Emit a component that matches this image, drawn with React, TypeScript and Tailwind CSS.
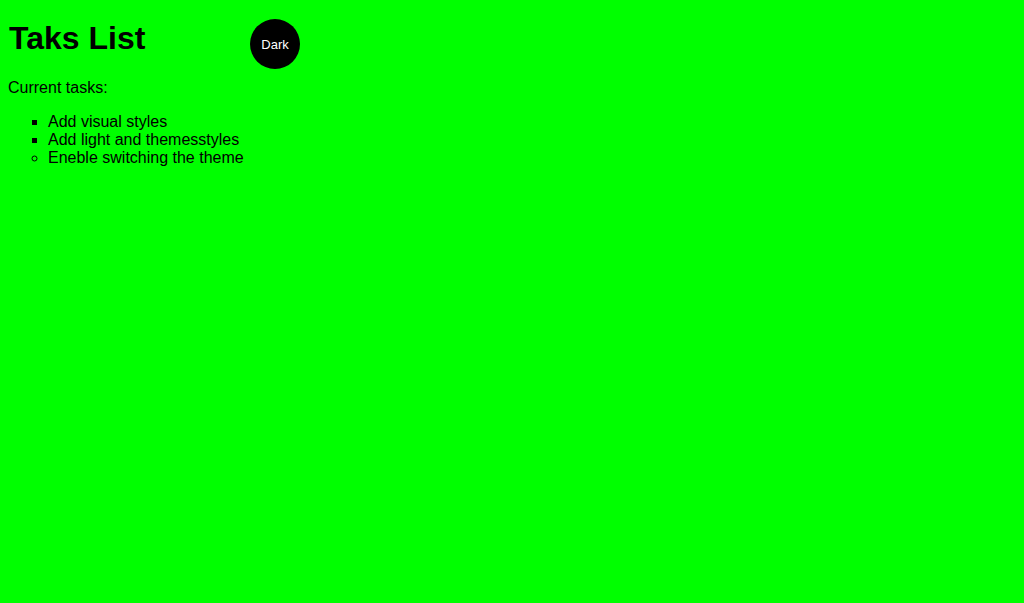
export default function App() {
  const tasks = [
    { text: "Add visual styles", done: true },
    { text: "Add light and themesstyles", done: true },
    { text: "Eneble switching the theme", done: false },
  ];

  return (
    <div className="min-h-screen bg-[#00ff00] p-2 font-['Liberation_Sans',Arial,sans-serif] text-black">
      {/* Header */}
      <div className="flex items-start pt-[11px]">
        <h1 className="w-[242px] pl-px pt-px text-[32px] font-bold leading-[37px]">Taks List</h1>
        <button className="flex h-[50px] w-[50px] items-center justify-center rounded-full bg-black pt-px text-[13px] text-white">
          Dark
        </button>
      </div>

      <p className="mt-[10px] text-base leading-[18px]">Current tasks:</p>

      <ul className="mt-4 pl-10 text-base leading-[18px]">
        {tasks.map((t) => (
          <li key={t.text} className={t.done ? "list-[square]" : "list-[circle]"}>
            {t.text}
          </li>
        ))}
      </ul>
    </div>
  );
}
